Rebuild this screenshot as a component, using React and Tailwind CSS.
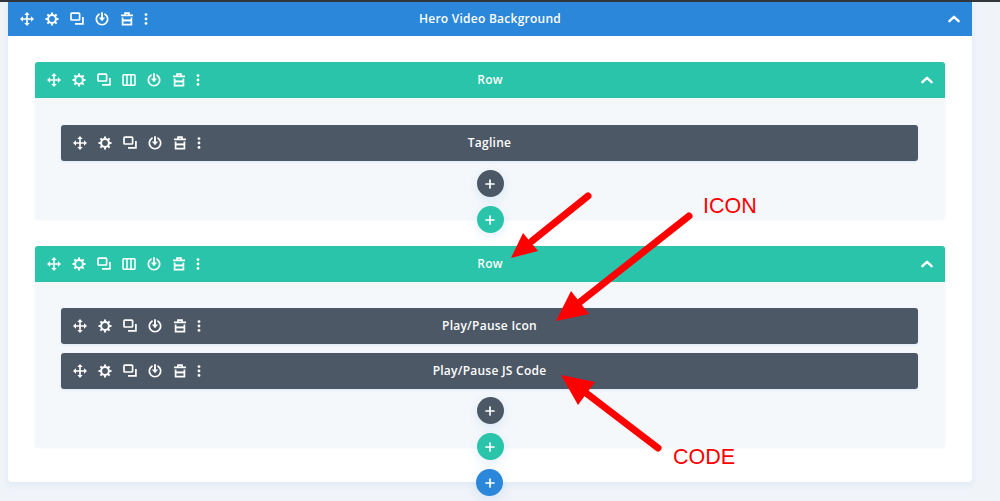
import React from 'react'

const Move = () => (
  <svg width="14" height="14" viewBox="0 0 14 14" fill="currentColor">
    <path d="M7 0 9.7 3H7.8V6.2H11V4.3L14 7 11 9.7V7.8H7.8V11H9.7L7 14 4.3 11H6.2V7.8H3V9.7L0 7 3 4.3V6.2H6.2V3H4.3Z" />
  </svg>
)

const Gear = () => (
  <svg width="14" height="14" viewBox="0 0 14 14" fill="none" stroke="currentColor">
    <circle cx="7" cy="7" r="3.9" strokeWidth="2" />
    <path d="M7 .5V2.5M7 11.5V13.5M.5 7H2.5M11.5 7H13.5M2.4 2.4 3.8 3.8M10.2 10.2 11.6 11.6M11.6 2.4 10.2 3.8M3.8 10.2 2.4 11.6" strokeWidth="2" />
  </svg>
)

const Copy = () => (
  <svg width="14" height="14" viewBox="0 0 14 14" fill="none" stroke="currentColor" strokeWidth="1.7">
    <rect x="1" y="1.2" width="8.6" height="6.8" rx="0.8" />
    <path d="M12.9 5V11.9H5" />
  </svg>
)

const Columns = () => (
  <svg width="14" height="14" viewBox="0 0 14 14" fill="none" stroke="currentColor" strokeWidth="1.5">
    <rect x="1" y="1.7" width="12" height="10.6" rx="0.8" />
    <path d="M5 1.7V12.3M9 1.7V12.3" />
  </svg>
)

const Power = () => (
  <svg width="14" height="14" viewBox="0 0 14 14" fill="none" stroke="currentColor" strokeWidth="1.7" strokeLinecap="round">
    <path d="M4 2.2A5.7 5.7 0 1 0 10 2.2" />
    <path d="M7 1V7.4" strokeWidth="1.9" />
    <path d="M4.6 6 7 8.8 9.4 6Z" fill="currentColor" strokeWidth="0.6" />
  </svg>
)

const Trash = () => (
  <svg width="14" height="14" viewBox="0 0 14 14" fill="none" stroke="currentColor" strokeWidth="1.7">
    <path d="M1 3.4H13M5 3V1.2H9V3" />
    <path d="M2.6 5.6V12.7H11.4V5.6" />
    <path d="M2.6 8.4H11.4" strokeWidth="2" />
  </svg>
)

const Dots = () => (
  <svg width="4" height="12" viewBox="0 0 4 12" fill="currentColor">
    <circle cx="2" cy="1.6" r="1.4" />
    <circle cx="2" cy="6" r="1.4" />
    <circle cx="2" cy="10.4" r="1.4" />
  </svg>
)

const Chevron = () => (
  <svg width="12" height="8" viewBox="0 0 12 8" fill="none" stroke="currentColor" strokeWidth="2.4" strokeLinecap="round" strokeLinejoin="round">
    <path d="M1.4 6.2 6 1.8 10.6 6.2" />
  </svg>
)

function Tools({ row }) {
  const icons = row ? [Move, Gear, Copy, Columns, Power, Trash] : [Move, Gear, Copy, Power, Trash]
  return (
    <div className="flex items-center">
      {icons.map((Icon, i) => (
        <span key={i} className="flex w-[25px] justify-center">
          <Icon />
        </span>
      ))}
      <span className="flex w-[13px] justify-center">
        <Dots />
      </span>
    </div>
  )
}

function Bar({ title, row, chevron, className }) {
  return (
    <div className={`relative flex items-center justify-center text-white ${className}`}>
      <div className="absolute left-[6px] top-0 flex h-full items-center">
        <Tools row={row} />
      </div>
      <span className="text-[12px] font-semibold leading-none tracking-[0.25px]">{title}</span>
      {chevron && (
        <span className="absolute right-[12px] top-0 flex h-full items-center">
          <Chevron />
        </span>
      )}
    </div>
  )
}

function Module({ title }) {
  return <Bar title={title} className="h-[36px] rounded-[3px] bg-[#4c5866] shadow-[0_1px_3px_rgba(43,135,218,0.12)]" />
}

function Plus({ color }) {
  return (
    <div className={`flex h-[27px] w-[27px] items-center justify-center rounded-full text-white shadow-[0_3px_12px_rgba(43,135,218,0.14)] ${color}`}>
      <svg width="10" height="10" viewBox="0 0 10 10" fill="none" stroke="currentColor" strokeWidth="1.7" strokeLinecap="round">
        <path d="M5 1V9M1 5H9" />
      </svg>
    </div>
  )
}

function Row({ modules, bodyClass, plusClass, className }) {
  return (
    <div className={`rounded-[3px] bg-[#f5f8fb] shadow-[0_1px_2px_rgba(43,135,218,0.08)] ${className}`}>
      <Bar title="Row" row chevron className="h-[36px] rounded-t-[3px] bg-[#29c4a9]" />
      <div className={`flex flex-col gap-[9px] pl-[26px] pr-[27px] ${bodyClass}`}>
        {modules.map((m) => (
          <Module key={m} title={m} />
        ))}
      </div>
      <div className={`flex flex-col items-center gap-[9px] ${plusClass}`}>
        <Plus color="bg-[#4c5866]" />
        <Plus color="bg-[#29c4a9]" />
      </div>
    </div>
  )
}

function Arrow({ tail, neck, head }) {
  return (
    <>
      <line x1={tail[0]} y1={tail[1]} x2={neck[0]} y2={neck[1]} stroke="#ff0000" strokeWidth="7" strokeLinecap="round" />
      <polygon points={head} fill="#ff0000" />
    </>
  )
}

export default function App() {
  return (
    <div className="relative h-[501px] w-[1000px] overflow-hidden bg-[#f0f3f8] font-['Open_Sans',sans-serif]">
      <div className="h-[2px] bg-[#32373c]" />

      <div className="ml-[8px] w-[964px] rounded-b-[4px] bg-white pb-[35px] shadow-[0_3px_6px_rgba(43,135,218,0.08)]">
        <Bar title="Hero Video Background" chevron className="h-[34px] bg-[#2b87da]" />
        <div className="flex flex-col px-[27px] pt-[26px]">
          <Row modules={['Tagline']} bodyClass="pt-[27px]" plusClass="mt-[9px]" className="h-[157px]" />
          <Row
            modules={['Play/Pause Icon', 'Play/Pause JS Code']}
            bodyClass="pt-[26px]"
            plusClass="mt-[8px]"
            className="mt-[27px] h-[201px]"
          />
        </div>
      </div>

      <div className="absolute left-[476px] top-[469px]">
        <Plus color="bg-[#2b87da]" />
      </div>

      <svg className="absolute left-0 top-0" width="1000" height="501">
        <Arrow tail={[588, 196]} neck={[532, 241]} head="511,258 523,233 538,251" />
        <Arrow tail={[689, 216]} neck={[580, 302]} head="556,321 571,291 589,314" />
        <Arrow tail={[658, 448]} neck={[586, 393]} head="561,375 595,382 578,405" />
      </svg>

      <span className="absolute left-[703px] top-[193px] font-['Liberation_Sans',sans-serif] text-[21.5px] leading-[26px] text-[#ff0000]">ICON</span>
      <span className="absolute left-[673px] top-[444px] font-['Liberation_Sans',sans-serif] text-[21.5px] leading-[26px] text-[#ff0000]">CODE</span>
    </div>
  )
}
